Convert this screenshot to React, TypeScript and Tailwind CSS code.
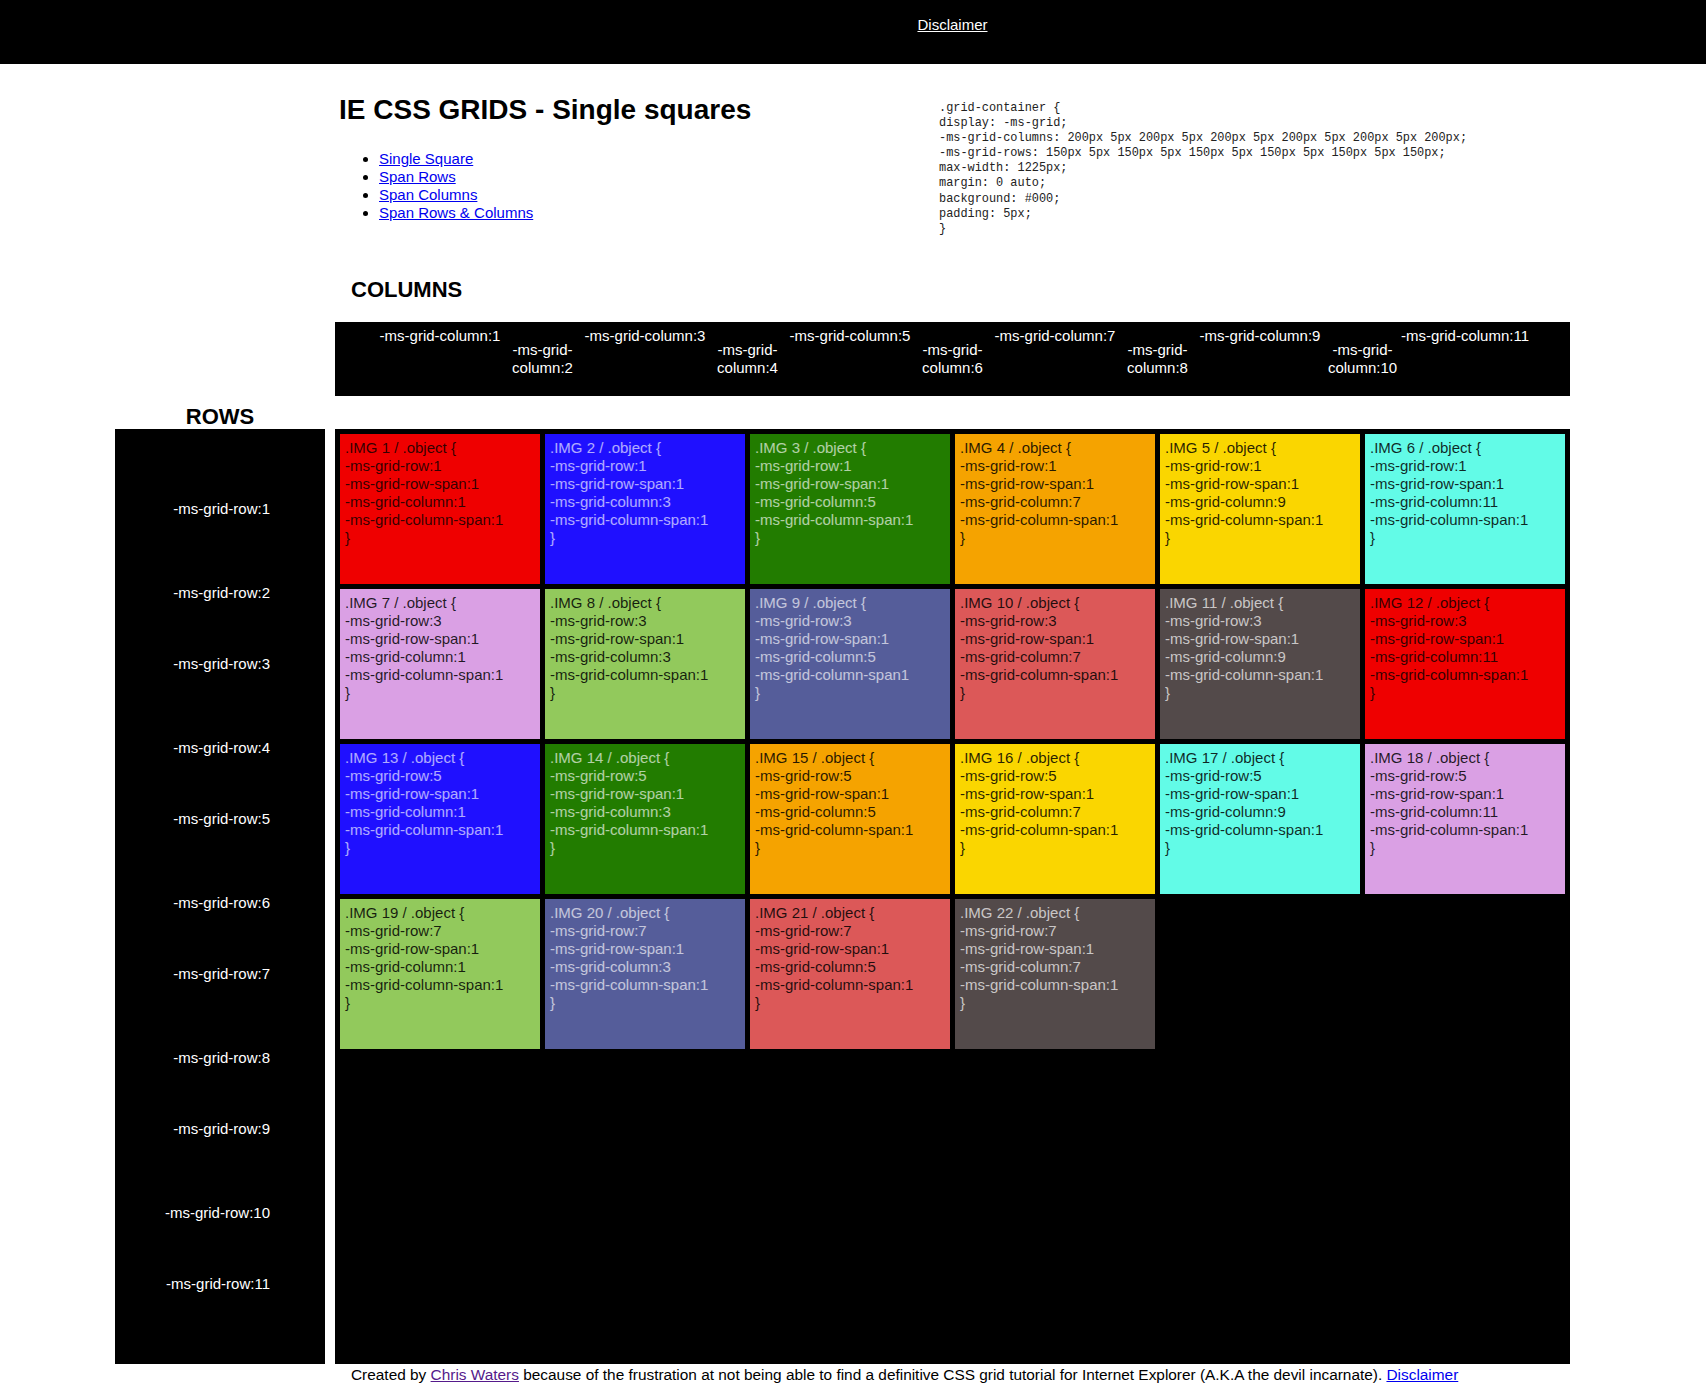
const CELL_COLORS = [
    { bg: "bg-[#ef0000]", fg: "text-black/80" },
    { bg: "bg-[#1f10ff]", fg: "text-white/65" },
    { bg: "bg-[#227c00]", fg: "text-white/65" },
    { bg: "bg-[#f5a300]", fg: "text-black/85" },
    { bg: "bg-[#fad600]", fg: "text-black/85" },
    { bg: "bg-[#62fbe7]", fg: "text-black/85" },
    { bg: "bg-[#daa0e4]", fg: "text-black/85" },
    { bg: "bg-[#92c95c]", fg: "text-black/85" },
    { bg: "bg-[#555d9a]", fg: "text-white/65" },
    { bg: "bg-[#dc5858]", fg: "text-black/85" },
    { bg: "bg-[#534a4a]", fg: "text-white/70" },
];

const CODE = [
    ".grid-container {",
    "display: -ms-grid;",
    "-ms-grid-columns: 200px 5px 200px 5px 200px 5px 200px 5px 200px 5px 200px;",
    "-ms-grid-rows: 150px 5px 150px 5px 150px 5px 150px 5px 150px 5px 150px;",
    "max-width: 1225px;",
    "margin: 0 auto;",
    "background: #000;",
    "padding: 5px;",
    "}",
];

const LINKS = ["Single Square", "Span Rows", "Span Columns", "Span Rows & Columns"];

const cells = Array.from({ length: 22 }, (_, i) => {
    const row = Math.floor(i / 6) * 2 + 1;
    const col = (i % 6) * 2 + 1;
    return { n: i + 1, row, col, color: CELL_COLORS[i % 11] };
});

const ColumnLabel = ({ n }: { n: number }) => {
    if (n % 2 === 1) {
        return <div className="self-start whitespace-nowrap text-center">-ms-grid-column:{n}</div>;
    }
    return (
        <div className="flex w-[5px] justify-center self-center">
            <span className="whitespace-nowrap text-center">
                -ms-grid-
                <br />
                column:{n}
            </span>
        </div>
    );
};

const RowLabel = ({ n }: { n: number }) => {
    if (n % 2 === 1) {
        return <div className="flex items-center justify-end whitespace-nowrap">-ms-grid-row:{n}</div>;
    }
    return <div className="h-[5px] whitespace-nowrap text-right">-ms-grid-row:{n}</div>;
};

const App = () => {
    const nums = Array.from({ length: 11 }, (_, i) => i + 1);

    return (
        <div className="min-h-screen bg-white pb-[13px] font-['Liberation_Sans',Arial,sans-serif] text-[15px] leading-[18px] text-black">
            <header className="h-[64px] bg-black">
                <div className="ml-[335px] w-[1235px] pt-[16px] text-center">
                    <a href="#" className="text-white underline">
                        Disclaimer
                    </a>
                </div>
            </header>

            <section className="ml-[339px] flex h-[211px]">
                <div className="w-[600px]">
                    <h1 className="mt-[30px] text-[28px] font-bold leading-[32px]">IE CSS GRIDS - Single squares</h1>
                    <ul className="mt-[24px] list-disc pl-[40px]">
                        {LINKS.map((l) => (
                            <li key={l}>
                                <a href="#" className="text-[#0000ee] underline">
                                    {l}
                                </a>
                            </li>
                        ))}
                    </ul>
                </div>
                <pre className="mt-[37px] font-['Liberation_Mono','DejaVu_Sans_Mono',monospace] text-[11.9px] leading-[15.1px] text-[#222]">
                    {CODE.join("\n")}
                </pre>
            </section>

            <div className="ml-[115px] grid grid-cols-[210px_1235px] gap-x-[10px]">
                <div className="-mb-[1px] self-end text-center text-[22px] font-bold leading-[26px]">ROWS</div>
                <div className="pb-[33px]">
                    <h2 className="pl-[16px] pt-[2px] text-[22px] font-bold leading-[26px]">COLUMNS</h2>
                    <div className="mt-[19px] grid h-[74px] grid-cols-[200px_5px_200px_5px_200px_5px_200px_5px_200px_5px_200px] bg-black p-[5px] text-white">
                        {nums.map((n) => (
                            <ColumnLabel key={n} n={n} />
                        ))}
                    </div>
                </div>

                <div className="grid grid-rows-[150px_5px_150px_5px_150px_5px_150px_5px_150px_5px_150px] bg-black py-[5px] pl-[5px] pr-[55px] text-white">
                    {nums.map((n) => (
                        <RowLabel key={n} n={n} />
                    ))}
                </div>

                <div className="grid grid-cols-[repeat(6,200px)] grid-rows-[repeat(6,150px)] gap-[5px] bg-black p-[5px]">
                    {cells.map((c) => (
                        <div key={c.n} className={`${c.color.bg} ${c.color.fg} p-[5px]`}>
                            <div>.IMG {c.n} / .object {"{"}</div>
                            <div>-ms-grid-row:{c.row}</div>
                            <div>-ms-grid-row-span:1</div>
                            <div>-ms-grid-column:{c.col}</div>
                            <div>{c.n === 9 ? "-ms-grid-column-span1" : "-ms-grid-column-span:1"}</div>
                            <div>{"}"}</div>
                        </div>
                    ))}
                </div>

                <footer className="col-start-2 pl-[16px] pt-[2px] text-[15.4px]">
                    Created by{" "}
                    <a href="#" className="text-[#551a8b] underline">
                        Chris Waters
                    </a>{" "}
                    because of the frustration at not being able to find a definitive CSS grid tutorial for Internet Explorer (A.K.A the
                    devil incarnate).{" "}
                    <a href="#" className="text-[#0000ee] underline">
                        Disclaimer
                    </a>
                </footer>
            </div>
        </div>
    );
};

export default App;
